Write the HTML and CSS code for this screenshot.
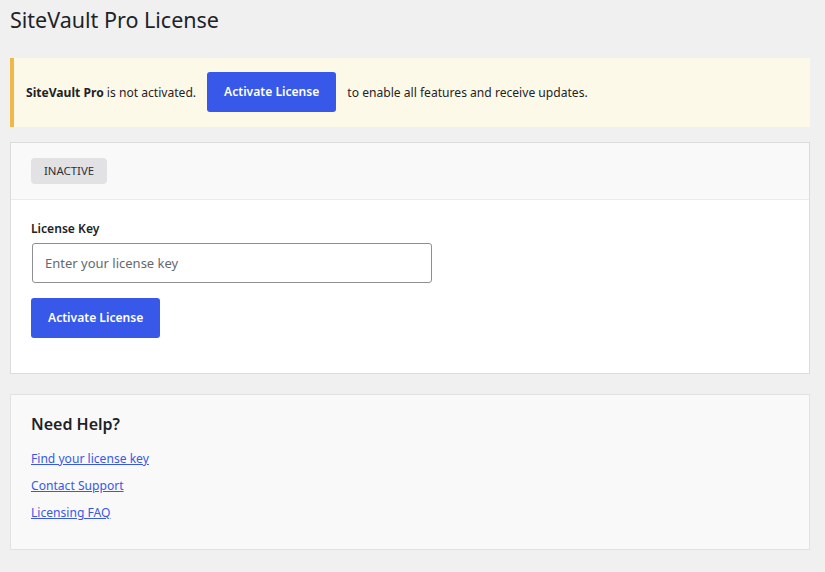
FILE: index.html
```html
<!DOCTYPE html>
<html lang="en">
<head>
    <meta charset="UTF-8">
    <meta name="viewport" content="width=device-width, initial-scale=1.0">
    <title>SiteVault Pro License</title>
    <link rel="stylesheet" href="styles.css">
</head>
<body>
    <div class="wrap">
        <h1>SiteVault Pro License</h1>

        <div class="notice">
            <span><strong>SiteVault Pro</strong> is not activated.</span>
            <a class="btn" href="#license">Activate License</a>
            <span>to enable all features and receive updates.</span>
        </div>

        <div class="card">
            <div class="card-head">
                <span class="badge">Inactive</span>
            </div>
            <form class="card-body" id="license" onsubmit="return false">
                <label for="licenseKey">License Key</label>
                <input type="text" id="licenseKey" placeholder="Enter your license key">
                <button class="btn" type="submit">Activate License</button>
            </form>
        </div>

        <div class="help">
            <h3>Need Help?</h3>
            <a href="#">Find your license key</a>
            <a href="#">Contact Support</a>
            <a href="#">Licensing FAQ</a>
        </div>
    </div>
</body>
</html>
```

FILE: styles.css
```css
body {
    margin: 0;
    background-color: #f0f0f1;
    color: #1d2327;
    font-family: "Noto Sans", "Open Sans", sans-serif;
    font-size: 12.1px;
}
.wrap {
    margin: 0 15px 0 10px;
    padding-top: 5px;
}
h1 {
    font-size: 21.5px;
    font-weight: 400;
    margin: 0 0 23px;
    line-height: 30px;
}
.notice {
    display: flex;
    align-items: center;
    gap: 11px;
    background: #fcf9e8;
    border-left: 4px solid #f0b849;
    padding: 14px 12px 15px;
    margin-bottom: 15px;
}
.btn {
    display: inline-block;
    background: #3858e9;
    color: white;
    font: inherit;
    font-weight: 600;
    text-decoration: none;
    border: none;
    border-radius: 3px;
    padding: 0 17px;
    line-height: 40px;
    height: 40px;
    cursor: pointer;
}
.card {
    background: white;
    border: 1px solid #dcdcde;
    margin-bottom: 20px;
}
.card-head {
    background: #f9f9f9;
    border-bottom: 1px solid #ebebeb;
    padding: 15px 20px;
}
.badge {
    display: inline-block;
    background: #e2e2e4;
    color: #2c3338;
    font-size: 11.4px;
    text-transform: uppercase;
    padding: 0 13px;
    line-height: 26px;
    height: 26px;
    border-radius: 4px;
}
.card-body {
    padding: 20px 20px 35px;
    display: flex;
    flex-direction: column;
    align-items: flex-start;
}
label {
    font-weight: 600;
    margin-bottom: 6px;
}
input {
    width: 400px;
    height: 40px;
    box-sizing: border-box;
    border: 1px solid #8c8f94;
    border-radius: 3px;
    padding: 0 12px;
    font: inherit;
    font-size: 13px;
    margin: 0 0 15px 1px;
}
input::placeholder {
    color: #646970;
}
.help {
    background: #f9f9fa;
    border: 1px solid #e2e2e4;
    padding: 18px 20px 28px;
}
.help h3 {
    font-size: 16px;
    font-weight: 600;
    margin: 0 0 15px;
}
.help a {
    display: block;
    color: #3858e9;
    margin-bottom: 10px;
}
.help a:last-child {
    margin-bottom: 0;
}
```
